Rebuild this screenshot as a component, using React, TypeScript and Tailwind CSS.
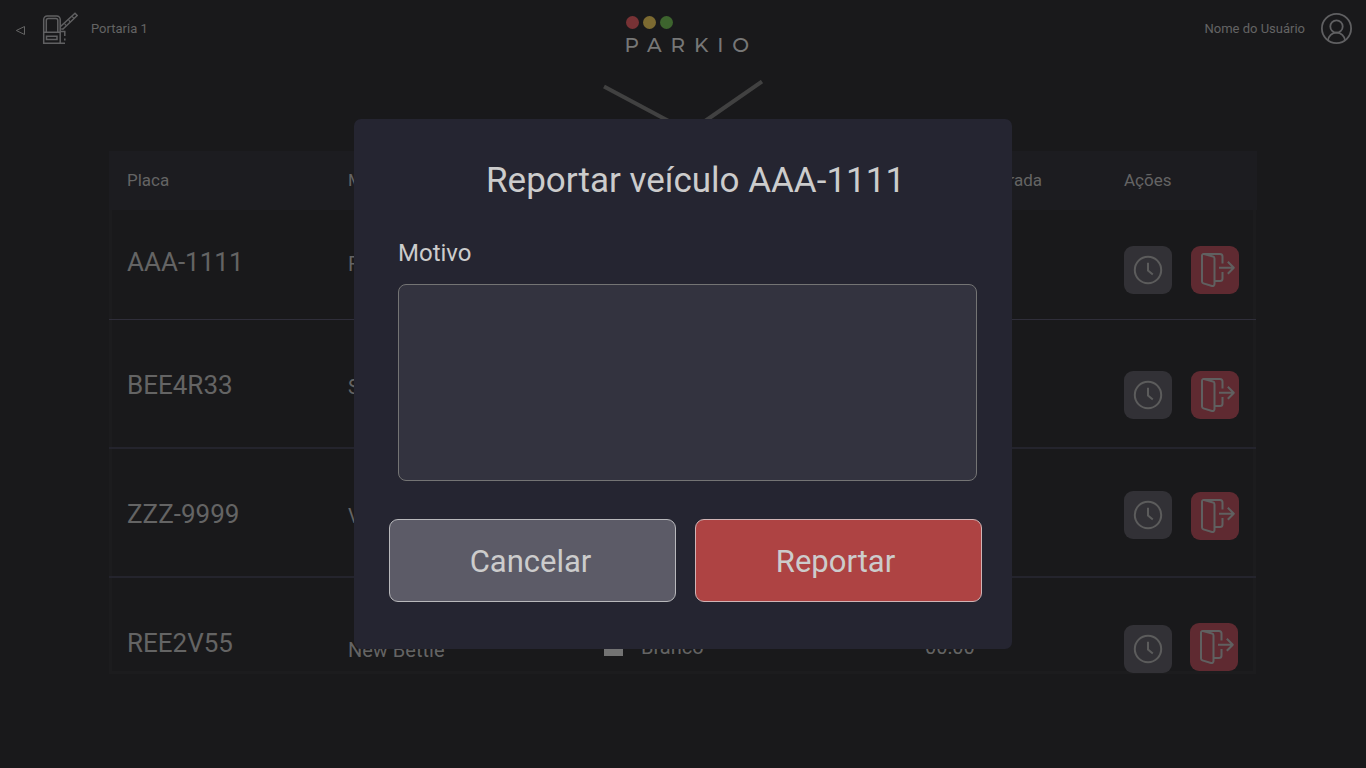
import React from "react";

function BoothIcon() {
  return (
    <svg width="36" height="34" viewBox="0 0 36 34" fill="none" stroke="#606062" strokeWidth="1.5">
      <path d="M1.7 32V7.500a3.500 3.500 0 0 1 3.500-3.500h9.500a3.500 3.500 0 0 1 3.500 3.500V32" />
      <path d="M4.300 20V8.500a2 2 0 0 1 2-2h7.500a2 2 0 0 1 2 2V20" />
      <path d="M1 20.300h17.500M1 31.300h22M4.500 24.300h10.500v3.300H4.500z" />
      <path d="M18.500 14.500 33 1.200l2.200 2.300L20.500 17.500M18.500 19.500h4.300v4.500" />
      <path d="m22.500 11.500 1.500 2M26.500 7.500l1.500 2.500M30 4.300l2 2M20 16v2" strokeWidth="1.200" />
      <path d="M22.800 26.500v2" />
    </svg>
  );
}

function UserIcon() {
  return (
    <svg width="32" height="32" viewBox="0 0 32 32" fill="none" stroke="#606062" strokeWidth="1.800">
      <circle cx="16.500" cy="16.500" r="14.600" />
      <circle cx="16.500" cy="14.500" r="6.200" />
      <path d="M8 28.500c.4-4.500 4-7.800 8.500-7.800s8.100 3.300 8.500 7.800" />
    </svg>
  );
}

function ClockButton({ className }: { className: string }) {
  return (
    <button className={`flex h-12 w-12 shrink-0 items-center justify-center rounded-[9px] bg-[#323136] ${className}`}>
      <svg width="30" height="30" viewBox="0 0 30 30" fill="none" stroke="#5c5c5c" strokeWidth="2">
        <circle cx="15" cy="15" r="13.200" />
        <path d="M15 7.700v7.800l4.800 4" />
      </svg>
    </button>
  );
}

function ExitButton({ className }: { className: string }) {
  return (
    <button className={`h-12 w-12 shrink-0 rounded-[9px] bg-[#5f2a31] ${className}`}>
      <svg width="48" height="48" viewBox="0 0 48 48" fill="none" stroke="#606060" strokeWidth="2" strokeLinejoin="round">
        <path d="M11 9.500a1.500 1.500 0 0 1 2-1.400l9 2.400a2 2 0 0 1 1.500 2V38a2 2 0 0 1-2.500 2l-8.600-2.600A2 2 0 0 1 11 35.500z" />
        <path d="M12.500 8H29q2.500 0 2.500 2.500V17.500M31.500 26v6.500q0 2.500-2.500 2.500h-5.500" />
        <path d="M28 21.800h15M36.800 15.800l6 6-6 6" />
      </svg>
    </button>
  );
}

const rows = [
  { plate: "AAA-1111", model: "Fusca", color: "Preto", row: "h-[110px] border-b border-[#2f2e3a]", text: "mt-[34px]", sub: "mt-[42px]", clock: "mt-[36px]", exit: "mt-[36px] ml-[19px]" },
  { plate: "BEE4R33", model: "Sandero", color: "Prata", row: "h-[129px] border-b-2 border-[#24242d]", text: "mt-[47px]", sub: "mt-[55px]", clock: "mt-[51px]", exit: "mt-[51px] ml-[19px]" },
  { plate: "ZZZ-9999", model: "Voyage", color: "Cinza", row: "h-[129px] border-b-2 border-[#24242d]", text: "mt-[47px]", sub: "mt-[55px]", clock: "mt-[42px]", exit: "mt-[43px] ml-[19px]" },
  { plate: "REE2V55", model: "New Bettle", color: "Branco", row: "h-[93px]", text: "mt-[47px]", sub: "mt-[60px]", clock: "mt-[47px]", exit: "mt-[45px] ml-[18px]" },
];

export default function App() {
  return (
    <div className="relative h-[768px] w-[1366px] overflow-hidden bg-[#19191b] font-['Roboto',sans-serif] text-[#646464]">
      <header className="flex h-[56px] items-start justify-between">
        <div className="flex w-[400px] items-start pl-[15px]">
          <svg className="mt-[25px]" width="11" height="11" viewBox="0 0 11 11" fill="none" stroke="#646464" strokeWidth="1">
            <path d="M9.500 1.500v8L1.300 5.500z" />
          </svg>
          <div className="mt-[12px] ml-[16px]"><BoothIcon /></div>
          <span className="mt-[19px] ml-[13px] text-[13px] leading-5">Portaria 1</span>
        </div>
        <div className="w-[140px] pt-[16px] pl-[12.5px] whitespace-nowrap">
          <div className="flex gap-[4px]">
            <span className="h-[13px] w-[13px] rounded-full bg-[#783235]" />
            <span className="h-[13px] w-[13px] rounded-full bg-[#7c6a31]" />
            <span className="h-[13px] w-[13px] rounded-full bg-[#3d642e]" />
          </div>
          <div className="mt-[6px] -ml-px font-['Montserrat','Lato',sans-serif] text-[20px] leading-5 font-medium tracking-[8.9px] text-[#777777]">PARKIO</div>
        </div>
        <div className="flex w-[400px] items-start justify-end pr-[14px]">
          <span className="mt-[19px] text-[13px] leading-5">Nome do Usuário</span>
          <div className="mt-[12px] ml-[15px]"><UserIcon /></div>
        </div>
      </header>
      <div className="flex h-[95px] justify-center pt-[24px]">
        <svg width="160" height="60" viewBox="0 0 160 60" fill="none" stroke="#414141" strokeWidth="4">
          <path d="M1 6.500 75 46M159 1.500 92 48" />
        </svg>
      </div>
      <main className="ml-[109px] w-[1148px]">
        <div className="flex h-[59px] items-center bg-[#1c1c20] pl-[18px] text-[17px]">
          <span className="w-[221px]">Placa</span>
          <span className="w-[256px]">Modelo</span>
          <span className="w-[317px]">Cor</span>
          <span className="w-[203px]">Hora de entrada</span>
          <span>Ações</span>
        </div>
        <div className="h-[464px] w-[1147px] border-x-[3px] border-b-[3px] border-[#1c1c1e]">
          {rows.map((r) => (
            <div key={r.plate} className={`-ml-[3px] flex w-[1147px] items-start pl-[18px] text-xl ${r.row}`}>
              <span className={`w-[221px] text-[26px] leading-9 ${r.text}`}>{r.plate}</span>
              <span className={`w-[256px] leading-6 ${r.sub}`}>{r.model}</span>
              <span className={`flex w-[321px] items-center gap-[18px] leading-6 ${r.text}`}>
                <i className="mt-[8px] h-[19px] w-[19px] bg-[#737373]" />
                <span className="mt-[10px]">{r.color}</span>
              </span>
              <span className={`w-[199px] pt-[10px] leading-6 ${r.text}`}>00:00</span>
              <ClockButton className={r.clock} />
              <ExitButton className={r.exit} />
            </div>
          ))}
        </div>
      </main>
      <div className="absolute inset-0 flex items-start justify-center pt-[119px]">
        <section className="h-[530px] w-[658px] rounded-[7px] bg-[#252531] text-[#cccccc]">
          <h1 className="pt-[37px] pl-[132px] text-[35px] leading-[50px]">Reportar veículo AAA-1111</h1>
          <label className="mt-[33px] ml-[44px] block text-[24px] leading-7">Motivo</label>
          <textarea className="mt-[17px] ml-[44px] block h-[197px] w-[579px] resize-none rounded-lg border border-[#747474] bg-[#33333f]" />
          <div className="mt-[38px] ml-[35px] flex gap-[19px] text-[31px]">
            <button className="h-[83px] w-[287px] rounded-[9px] border border-[#b8b8bb] bg-[#5c5b67] pt-[3px] pr-[4px]">Cancelar</button>
            <button className="h-[83px] w-[287px] rounded-[9px] border border-[#d0b4b5] bg-[#ae4343] pt-[3px] pr-[6px]">Reportar</button>
          </div>
        </section>
      </div>
    </div>
  );
}
